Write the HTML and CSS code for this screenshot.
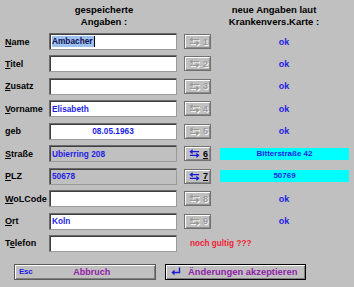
FILE: index.html
```html
<!DOCTYPE html>
<html lang="de">
<head>
    <meta charset="UTF-8">
    <title>Versichertendaten</title>
    <link rel="stylesheet" href="styles.css">
</head>
<body>
    <div class="dialog">
        <div class="heads">
            <div class="head">gespeicherte<br>Angaben :</div>
            <div class="head">neue Angaben laut<br>Krankenvers.Karte :</div>
        </div>

        <div class="form">
            <label class="lbl"><u>N</u>ame</label>
            <div class="field"><span class="sel">Ambacher</span><span class="caret"></span></div>
            <button class="swap" disabled><svg class="arr" viewBox="0 0 12 9"><path d="M11 2.5H1.5M4 0.5L1.5 2.5L4 4.5M1 6.5H10.5M8 4.5L10.5 6.5L8 8.5"/></svg><u>1</u></button>
            <div class="new">ok</div>

            <label class="lbl"><u>T</u>itel</label>
            <div class="field"></div>
            <button class="swap" disabled><svg class="arr" viewBox="0 0 12 9"><path d="M11 2.5H1.5M4 0.5L1.5 2.5L4 4.5M1 6.5H10.5M8 4.5L10.5 6.5L8 8.5"/></svg><u>2</u></button>
            <div class="new">ok</div>

            <label class="lbl"><u>Z</u>usatz</label>
            <div class="field"></div>
            <button class="swap" disabled><svg class="arr" viewBox="0 0 12 9"><path d="M11 2.5H1.5M4 0.5L1.5 2.5L4 4.5M1 6.5H10.5M8 4.5L10.5 6.5L8 8.5"/></svg><u>3</u></button>
            <div class="new">ok</div>

            <label class="lbl"><u>V</u>orname</label>
            <div class="field">Elisabeth</div>
            <button class="swap" disabled><svg class="arr" viewBox="0 0 12 9"><path d="M11 2.5H1.5M4 0.5L1.5 2.5L4 4.5M1 6.5H10.5M8 4.5L10.5 6.5L8 8.5"/></svg><u>4</u></button>
            <div class="new">ok</div>

            <label class="lbl">geb</label>
            <div class="field center">08.05.1963</div>
            <button class="swap" disabled><svg class="arr" viewBox="0 0 12 9"><path d="M11 2.5H1.5M4 0.5L1.5 2.5L4 4.5M1 6.5H10.5M8 4.5L10.5 6.5L8 8.5"/></svg><u>5</u></button>
            <div class="new">ok</div>

            <label class="lbl"><u>S</u>traße</label>
            <div class="field gray">Ubierring 208</div>
            <button class="swap"><svg class="arr" viewBox="0 0 12 9"><path d="M11 2.5H1.5M4 0.5L1.5 2.5L4 4.5M1 6.5H10.5M8 4.5L10.5 6.5L8 8.5"/></svg><u>6</u></button>
            <div class="new diff">Bitterstraße 42</div>

            <label class="lbl"><u>P</u>LZ</label>
            <div class="field gray">50678</div>
            <button class="swap"><svg class="arr" viewBox="0 0 12 9"><path d="M11 2.5H1.5M4 0.5L1.5 2.5L4 4.5M1 6.5H10.5M8 4.5L10.5 6.5L8 8.5"/></svg><u>7</u></button>
            <div class="new diff">50769</div>

            <label class="lbl"><u>W</u>oLCode</label>
            <div class="field"></div>
            <button class="swap" disabled><svg class="arr" viewBox="0 0 12 9"><path d="M11 2.5H1.5M4 0.5L1.5 2.5L4 4.5M1 6.5H10.5M8 4.5L10.5 6.5L8 8.5"/></svg><u>8</u></button>
            <div class="new">ok</div>

            <label class="lbl"><u>O</u>rt</label>
            <div class="field">Koln</div>
            <button class="swap" disabled><svg class="arr" viewBox="0 0 12 9"><path d="M11 2.5H1.5M4 0.5L1.5 2.5L4 4.5M1 6.5H10.5M8 4.5L10.5 6.5L8 8.5"/></svg><u>9</u></button>
            <div class="new">ok</div>

            <label class="lbl">T<u>e</u>lefon</label>
            <div class="field"></div>
            <div class="warn">noch gultig ???</div>
        </div>

        <div class="actions">
            <button class="btn cancel"><span class="esc">Esc</span><span class="cap">Abbruch</span></button>
            <button class="btn accept">
                <svg class="ret" viewBox="0 0 10 9"><path d="M8.5 0.5V5.5H2.5"/><path class="head" d="M0.5 5.5L3.5 2.5V8.5Z"/></svg>
                <span class="cap">Änderungen akzeptieren</span>
            </button>
        </div>
    </div>
</body>
</html>
```

FILE: styles.css
```css
body {
    margin: 0;
    background-color: #c0c0c0;
    font-family: "Liberation Sans", Arial, sans-serif;
    font-weight: bold;
}
.dialog {
    width: 354px;
    height: 287px;
    background-color: #c0c0c0;
}
.heads {
    display: flex;
    gap: 42px;
    padding: 4px 0 0 40px;
    height: 24px;
}
.head {
    width: 128px;
    text-align: center;
    font-size: 9.5px;
    line-height: 12px;
    color: #000;
}
.form {
    display: grid;
    grid-template-columns: 49px 135px 36px 128px;
    grid-auto-rows: 17px;
    row-gap: 5.45px;
    margin-top: 5px;
    align-items: center;
}
.lbl {
    padding-left: 5px;
    font-size: 9px;
    color: #000;
}
.lbl u {
    text-decoration-thickness: 1px;
    text-underline-offset: 1px;
}
.field {
    width: 128px;
    height: 17px;
    box-sizing: border-box;
    display: flex;
    align-items: center;
    padding: 0 2px;
    border: 1px solid #6a6a6a;
    border-right-color: #9a9a9a;
    border-bottom-color: #9a9a9a;
    box-shadow: inset 1px 1px #404040;
    background-color: #fff;
    color: #1e1ee6;
    font-size: 8.3px;
}
.field.center {
    justify-content: center;
}
.field.gray {
    background-color: #c0c0c0;
}
.sel {
    background-color: #9cc0ee;
    color: #101050;
    line-height: 11px;
    padding: 0 1px 0 0;
}
.caret {
    width: 1px;
    height: 11px;
    background-color: #000;
}
.swap {
    width: 27px;
    height: 15px;
    padding: 0 0 0 2px;
    display: flex;
    align-items: center;
    justify-content: center;
    gap: 3px;
    border: 1px solid #707070;
    background-color: #c0c0c0;
    box-shadow: inset 1px 1px #fff, inset -1px -1px #8c8c8c;
    font-family: "Liberation Sans", Arial, sans-serif;
    font-weight: bold;
    font-size: 9px;
    color: #000;
}
.swap .arr {
    width: 11px;
    height: 9px;
    fill: none;
    stroke: #1a1ad8;
    stroke-width: 1.3;
}
.swap u {
    text-underline-offset: 1px;
}
.swap:disabled {
    color: #9a9a9a;
    text-shadow: 1px 1px #f4f4f4;
}
.swap:disabled u {
    text-decoration: none;
}
.swap:disabled .arr {
    stroke: #9a9a9a;
    filter: drop-shadow(1px 1px 0 #f4f4f4);
}
.new {
    text-align: center;
    font-size: 9px;
    color: #1e1ee6;
}
.new.diff {
    height: 12px;
    line-height: 12px;
    width: 129px;
    background-color: #00ffff;
    font-size: 8px;
}
.warn {
    grid-column: 3 / 5;
    padding-left: 6px;
    font-size: 8.2px;
    color: #f01c34;
}
.actions {
    display: flex;
    gap: 9px;
    margin: 12px 0 0 14px;
}
.btn {
    height: 16px;
    display: flex;
    align-items: center;
    padding: 0 4px;
    border: 1px solid #5a5a5a;
    background-color: #c0c0c0;
    box-shadow: inset 1px 1px #fff, inset -1px -1px #808080;
    font-family: "Liberation Sans", Arial, sans-serif;
    font-weight: bold;
    color: #9020a8;
}
.cancel {
    width: 142px;
}
.cancel .esc {
    color: #1e1ee6;
    font-size: 8px;
    letter-spacing: -0.3px;
}
.cancel .cap {
    flex: 1;
    text-align: center;
    font-size: 9px;
}
.accept {
    width: 141px;
    border: 1px solid #000;
    gap: 7px;
    padding-left: 5px;
}
.ret {
    width: 10px;
    height: 9px;
}
.ret path {
    fill: none;
    stroke: #1a1ad8;
    stroke-width: 1.4;
}
.ret .head {
    fill: #1a1ad8;
    stroke: none;
}
.accept .cap {
    font-size: 9.4px;
}
```
